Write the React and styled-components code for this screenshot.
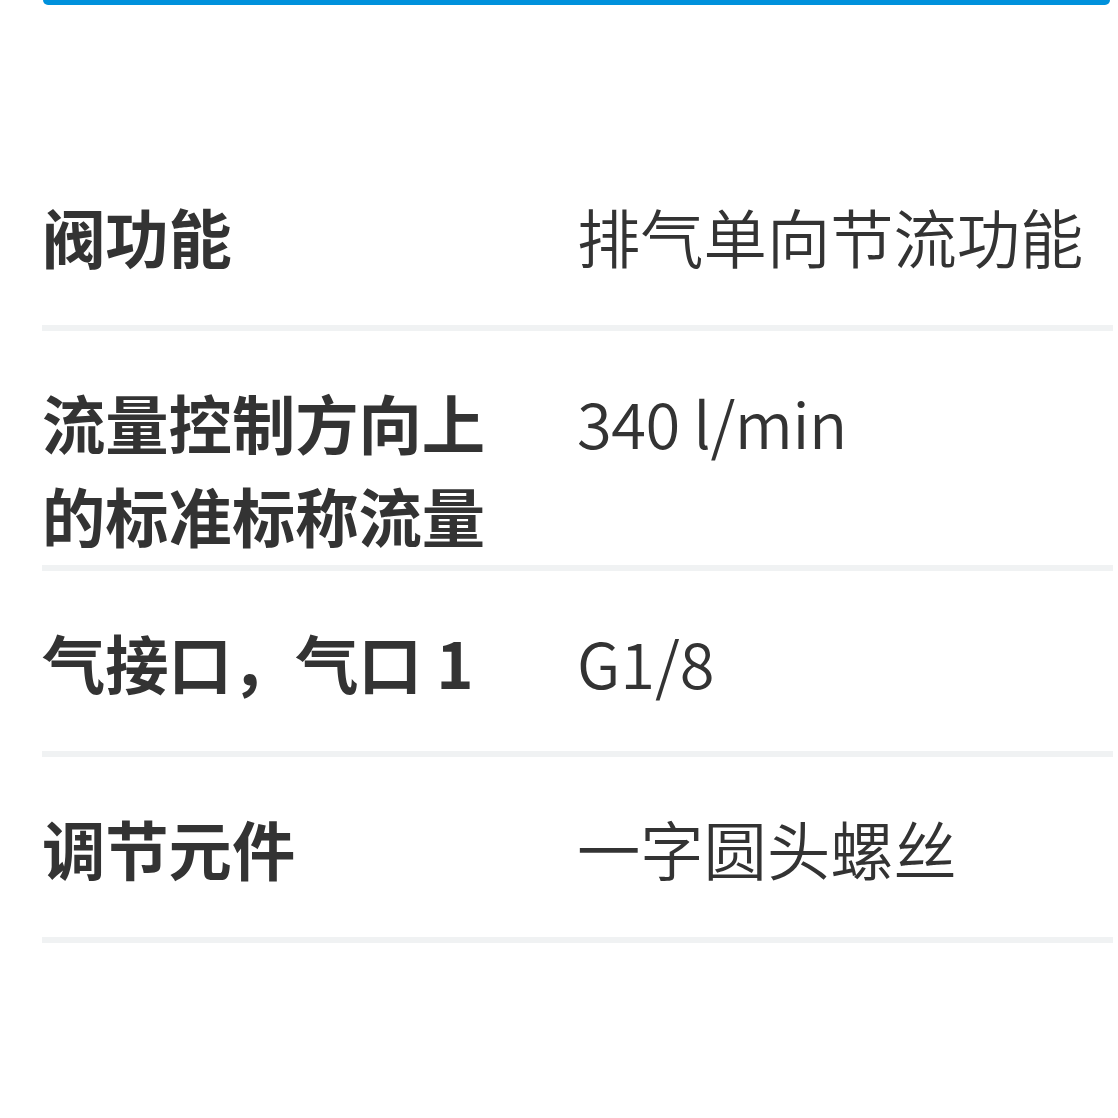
import React from 'react'
import styled, { createGlobalStyle } from 'styled-components'

const GlobalStyle = createGlobalStyle`
  html, body {
    margin: 0;
    padding: 0;
    background: #ffffff;
  }
  body {
    font-family: "Noto Sans CJK SC", "Noto Sans", sans-serif;
    color: #333333;
  }
`

const Page = styled.div`
  width: 1118px;
  min-height: 1118px;
  padding: 0 5px 0 42px;
  box-sizing: border-box;
`

const ButtonEdge = styled.div`
  height: 5px;
  margin-left: 1px;
  margin-right: 3px;
  background: #0091dc;
  border-radius: 0 0 9px 9px;
`

const Table = styled.dl`
  margin: 140px 0 0 0;
  padding: 0;
`

const Row = styled.div`
  display: grid;
  grid-template-columns: 490px 1fr;
  column-gap: 45px;
  min-height: 186px;
  padding: 44px 0 4px 0;
  box-sizing: border-box;
  border-bottom: 6px solid #f0f2f3;
`

const Label = styled.dt`
  margin: 0;
  font-size: 63.3px;
  line-height: 93px;
  font-weight: 700;
  color: #333333;
`

const Value = styled.dd`
  margin: 0;
  font-size: 63.3px;
  line-height: 93px;
  font-weight: 350;
  color: #333333;
  letter-spacing: ${p => (p.$latin ? '-0.5px' : '0')};
`

const rows = [
  { label: '阀功能', value: '排气单向节流功能' },
  { label: '流量控制方向上的标准标称流量', value: '340 l/min', latin: true },
  { label: '气接口，气口 1', value: 'G1/8' },
  { label: '调节元件', value: '一字圆头螺丝' },
]

export default function App() {
  return (
    <Page>
      <GlobalStyle />
      <ButtonEdge />
      <Table>
        {rows.map(r => (
          <Row key={r.label}>
            <Label>{r.label}</Label>
            <Value $latin={r.latin}>{r.value}</Value>
          </Row>
        ))}
      </Table>
    </Page>
  )
}
